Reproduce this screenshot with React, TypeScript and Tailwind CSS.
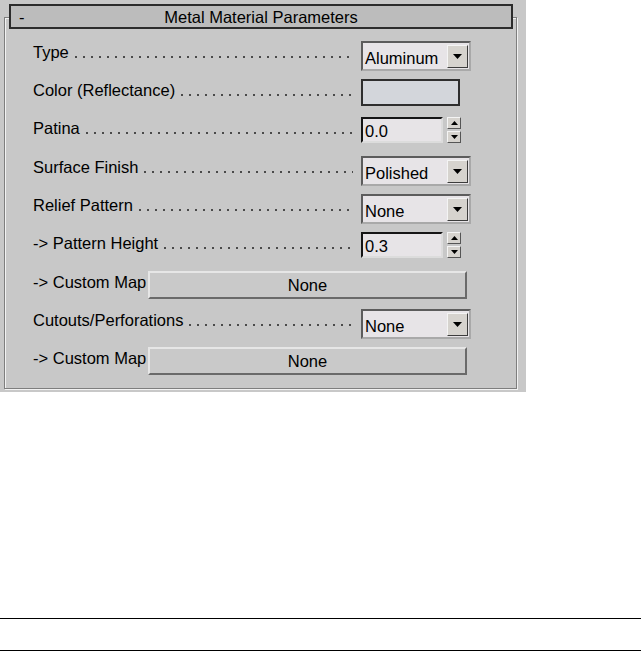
import React from "react";

const font = { fontFamily: '"Liberation Sans", Arial, sans-serif' };

function Leader() {
  return (
    <span className="flex-1 self-start mt-[15px] ml-[6px] mr-[8px] h-[2px] bg-[linear-gradient(to_right,#4a4a4a_0_2px,transparent_2px)] bg-[length:8px_2px] bg-repeat-x" />
  );
}

function Label({ text }: { text: string }) {
  return (
    <div className="flex w-[328px] items-start">
      <span className="mt-[1px] leading-[20px] whitespace-nowrap">{text}</span>
      <Leader />
    </div>
  );
}

function Arrow() {
  return (
    <svg width="9" height="5" viewBox="0 0 9 5">
      <path d="M0 0h9L4.5 5z" fill="#000" />
    </svg>
  );
}

function Dropdown({ value }: { value: string }) {
  return (
    <div className="flex h-[30px] w-[110px] items-center justify-between border-2 border-t-[#5c5c5c] border-l-[#5c5c5c] border-b-[#a9a9a9] border-r-[#a9a9a9] bg-[#e7e4e7] pl-[2px] pr-[1px]">
      <span className="leading-[20px] mt-[3px]">{value}</span>
      <div className="flex h-[23px] w-[21px] items-center justify-center border border-t-[#f4f4f4] border-l-[#f4f4f4] border-b-[#3c3c3c] border-r-[#3c3c3c] bg-[#d6d3ce]">
        <Arrow />
      </div>
    </div>
  );
}

function Spinner({ value }: { value: string }) {
  return (
    <div className="flex items-start gap-[4px]">
      <div className="flex h-[26px] w-[82px] items-center border-2 border-t-[#151515] border-l-[#151515] border-b-[#dcdcdc] border-r-[#dcdcdc] bg-[#e7e4e7] pl-[2px]">
        <span className="leading-[20px] mt-[1px]">{value}</span>
      </div>
      <div className="flex h-[26px] w-[14px] flex-col justify-between">
        <div className="flex h-[12px] items-center justify-center border border-t-[#f4f4f4] border-l-[#f4f4f4] border-b-[#555] border-r-[#555] bg-[#d6d3ce]">
          <svg width="7" height="4" viewBox="0 0 7 4">
            <path d="M3.5 0L7 4H0z" fill="#000" />
          </svg>
        </div>
        <div className="flex h-[12px] items-center justify-center border border-t-[#f4f4f4] border-l-[#f4f4f4] border-b-[#555] border-r-[#555] bg-[#d6d3ce]">
          <svg width="7" height="4" viewBox="0 0 7 4">
            <path d="M0 0h7L3.5 4z" fill="#000" />
          </svg>
        </div>
      </div>
    </div>
  );
}

function MapButton() {
  return (
    <div className="flex h-[28px] w-[319px] items-center justify-center border-2 border-t-[#e6e6e6] border-l-[#e6e6e6] border-b-[#6a6a6a] border-r-[#6a6a6a] bg-[#c9c9c9]">
      <span className="leading-[20px]">None</span>
    </div>
  );
}

function MapRow({ h }: { h: string }) {
  return (
    <div className={`flex items-start ${h}`}>
      <span className="mt-[1px] w-[115px] leading-[20px] whitespace-nowrap">-&gt; Custom Map</span>
      <MapButton />
    </div>
  );
}

export default function App() {
  return (
    <div className="h-[652px] w-[641px] bg-white text-[16.5px] text-black" style={font}>
      <div className="relative h-[392px] w-[526px] bg-[#c8c8c8] pt-[17px] pl-[4px]">
        <div className="h-[372px] w-[513px] border border-[#7e7e7e] shadow-[inset_1px_1px_0_#f2f2f2,1px_1px_0_#f2f2f2] pt-[23px] pl-[28px]">
          <div className="flex h-[38px] items-start">
            <Label text="Type" />
            <Dropdown value="Aluminum" />
          </div>
          <div className="flex h-[38px] items-start">
            <Label text="Color (Reflectance)" />
            <div className="h-[27px] w-[99px] border-2 border-[#2e2e2e] bg-[#d3d6db]" />
          </div>
          <div className="flex h-[39px] items-start">
            <Label text="Patina" />
            <Spinner value="0.0" />
          </div>
          <div className="flex h-[38px] items-start">
            <Label text="Surface Finish" />
            <Dropdown value="Polished" />
          </div>
          <div className="flex h-[38px] items-start">
            <Label text="Relief Pattern" />
            <Dropdown value="None" />
          </div>
          <div className="flex h-[39px] items-start">
            <Label text="-> Pattern Height" />
            <Spinner value="0.3" />
          </div>
          <MapRow h="h-[38px]" />
          <div className="flex h-[38px] items-start">
            <Label text="Cutouts/Perforations" />
            <Dropdown value="None" />
          </div>
          <MapRow h="h-[30px]" />
        </div>
        <div className="absolute left-[9px] top-[4px] flex h-[25px] w-[504px] items-center border-2 border-[#2c2c2c] bg-[#bcbcbc] px-[8px]">
          <span className="w-[20px] leading-[20px]">-</span>
          <span className="flex-1 text-center leading-[20px] pr-[20px]">Metal Material Parameters</span>
        </div>
      </div>
      <div className="h-[226px]" />
      <div className="h-px w-full bg-black" />
      <div className="h-[31px]" />
      <div className="h-px w-full bg-black" />
    </div>
  );
}
